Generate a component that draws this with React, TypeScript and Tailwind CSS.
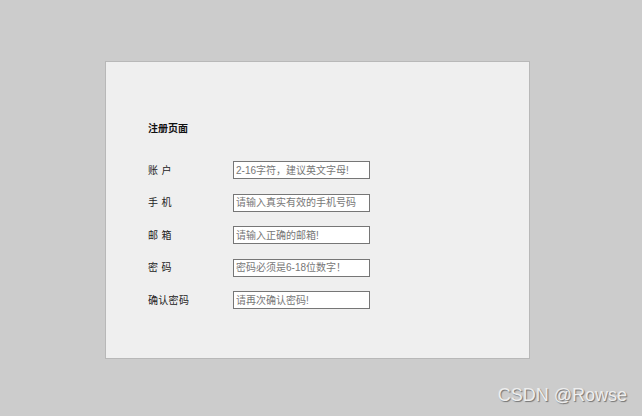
const fields = [
  { label: "账 户", placeholder: "2-16字符，建议英文字母!" },
  { label: "手 机", placeholder: "请输入真实有效的手机号码" },
  { label: "邮 箱", placeholder: "请输入正确的邮箱!" },
  { label: "密 码", placeholder: "密码必须是6-18位数字！" },
  { label: "确认密码", placeholder: "请再次确认密码!" },
];

export default function App() {
  return (
    <div
      className="relative min-h-[416px] w-full bg-[#cccccc] pl-[105px] pt-[61px]"
      style={{ fontFamily: '"Liberation Sans", "Noto Sans CJK SC", sans-serif' }}
    >
      {/* Registration panel */}
      <div className="flex h-[298px] w-[425px] flex-col border border-[#b8b8b8] bg-[#efefef] pl-[42px] pt-[60px]">
        <h1 className="h-[14px] text-[10px] font-bold leading-[14px] text-[#111]">注册页面</h1>
        <form className="mt-[25px] flex flex-col gap-[14.5px]">
          {fields.map((f, i) => (
            <div key={i} className="flex h-[18px] items-center">
              <label className="w-[85px] text-[10px] tracking-[0.3px] text-[#222]">{f.label}</label>
              <input
                type="text"
                placeholder={f.placeholder}
                className="h-[18px] w-[137px] border border-[#767676] bg-white px-[2px] text-[10px] text-[#333] outline-none placeholder:text-[#777]"
              />
            </div>
          ))}
        </form>
      </div>

      {/* Watermark */}
      <div
        className="absolute right-[15px] bottom-[7px] text-[18px] text-[#eeeeee]"
        style={{ textShadow: "1px 1px 1px rgba(0,0,0,0.45)" }}
      >
        CSDN @Rowse
      </div>
    </div>
  );
}
